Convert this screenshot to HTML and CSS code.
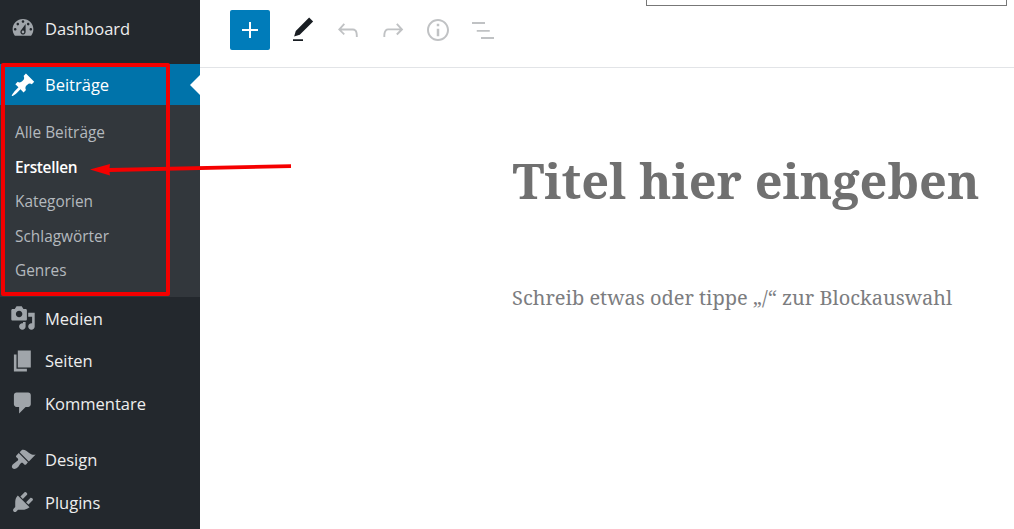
FILE: index.html
```html
<!DOCTYPE html>
<html lang="de">
<head>
<meta charset="utf-8">
<title>Beitrag erstellen</title>
<link rel="stylesheet" href="styles.css">
</head>
<body>
<div class="app">
  <nav class="sidebar">
    <a class="item"><svg class="mi" viewBox="0 0 20 20"><path d="M3.76 16h12.48c1.1-1.37 1.76-3.11 1.76-5 0-4.42-3.58-8-8-8s-8 3.58-8 8c0 1.89.66 3.63 1.76 5zM10 4c.55 0 1 .45 1 1s-.45 1-1 1-1-.45-1-1 .45-1 1-1zM6 6c.55 0 1 .45 1 1s-.45 1-1 1-1-.45-1-1 .45-1 1-1zm8 0c.55 0 1 .45 1 1s-.45 1-1 1-1-.45-1-1 .45-1 1-1zm-5.37 5.55L12 7v6c0 1.1-.9 2-2 2s-2-.9-2-2c0-.57.24-1.08.63-1.45zM4 10c.55 0 1 .45 1 1s-.45 1-1 1-1-.45-1-1 .45-1 1-1zm12 0c.55 0 1 .45 1 1s-.45 1-1 1-1-.45-1-1 .45-1 1-1zm-5 3c0-.55-.45-1-1-1s-1 .45-1 1 .45 1 1 1 1-.45 1-1z"/></svg>Dashboard</a>
    <div class="sep first"></div>
    <a class="item current"><svg class="mi" viewBox="0 0 20 20"><path d="M10.44 3.02l1.82-1.82 6.36 6.35-1.83 1.82c-1.05-.68-2.48-.57-3.41.36l-.75.75c-.92.93-1.04 2.35-.35 3.41l-1.83 1.82-2.41-2.41-2.8 2.79c-.42.42-3.38 2.71-3.8 2.29s1.86-3.39 2.28-3.81l2.79-2.79L4.1 9.36l1.83-1.82c1.05.69 2.48.57 3.4-.36l.75-.75c.93-.92 1.05-2.35.36-3.41z"/></svg>Beiträge</a>
    <div class="submenu">
      <a class="sub">Alle Beiträge</a>
      <a class="sub active">Erstellen</a>
      <a class="sub">Kategorien</a>
      <a class="sub">Schlagwörter</a>
      <a class="sub">Genres</a>
    </div>
    <a class="item"><svg class="mi" viewBox="0 0 20 20"><path d="M13 11V4c0-.55-.45-1-1-1h-1.67L9 1H5L3.67 3H2c-.55 0-1 .45-1 1v7c0 .55.45 1 1 1h10c.55 0 1-.45 1-1zM7 4.5c1.38 0 2.5 1.12 2.5 2.5S8.38 9.5 7 9.5 4.5 8.38 4.5 7 5.62 4.5 7 4.5zM14 6h5v10.5c0 1.38-1.12 2.5-2.5 2.5S14 17.88 14 16.5s1.12-2.5 2.5-2.5c.17 0 .34.02.5.05V9h-3V6zm-4 8.05V13h2v3.5c0 1.38-1.12 2.5-2.5 2.5S7 17.88 7 16.5 8.12 14 9.5 14c.17 0 .34.02.5.05z"/></svg>Medien</a>
    <a class="item"><svg class="mi" viewBox="0 0 20 20"><path d="M6 15V2h10v13H6zm-1 1h8v2H3V5h2v11z"/></svg>Seiten</a>
    <a class="item"><svg class="mi" viewBox="0 0 20 20"><path d="M5 2h9c1.1 0 2 .9 2 2v7c0 1.1-.9 2-2 2h-2l-5 5v-5H5c-1.1 0-2-.9-2-2V4c0-1.1.9-2 2-2z"/></svg>Kommentare</a>
    <div class="sep"></div>
    <a class="item"><svg class="mi" viewBox="0 0 20 20"><path d="M14.48 11.06L7.41 3.99l1.5-1.5c.5-.56 2.3-.47 3.51.32 1.21.8 1.43 1.28 2.91 2.1 1.18.64 2.45 1.26 4.45.85zm-.71.71L6.7 4.7 4.93 6.47c-.39.39-.39 1.02 0 1.41l1.06 1.06c.39.39.39 1.03 0 1.42-.6.6-1.43 1.11-2.21 1.69-.35.26-.7.53-1.01.84C1.43 13.71.96 15.35 1.98 16.37c1.01 1.01 2.65.55 3.99-.77.31-.31.58-.66.84-1.01.58-.78 1.09-1.61 1.69-2.21.39-.39 1.02-.39 1.41 0l1.06 1.06c.39.39 1.02.39 1.41 0z"/></svg>Design</a>
    <a class="item"><svg class="mi" viewBox="0 0 20 20"><path d="M13.11 4.36L9.87 7.6 8 5.73l3.24-3.24c.35-.34 1.05-.2 1.56.32.52.51.66 1.21.31 1.55zm-8 1.77l.91-1.12 9.01 9.01-1.19.84c-.71.71-2.63 1.16-3.82 1.16H6.14L4.9 17.26c-.59.59-1.54.59-2.12 0-.59-.58-.59-1.53 0-2.12l1.24-1.24v-3.88c0-1.13.4-3.19 1.09-3.89zm7.26 3.97l3.24-3.24c.34-.35 1.04-.21 1.55.31.52.51.66 1.21.31 1.55l-3.24 3.25z"/></svg>Plugins</a>
  </nav>
  <main class="main">
    <header class="toolbar">
      <button class="add" type="button"><svg viewBox="0 0 16 16"><path d="M7 0h2v7h7v2H9v7H7V9H0V7h7z"/></svg></button>
      <div class="tools">
        <svg class="tool dark" viewBox="0 0 24 24"><path d="M20.1 5.1L16.9 2 6.2 12.7l-1.3 4.4 4.5-1.3L20.1 5.1zM4 20.8h8v-1.5H4v1.5z"/></svg>
        <svg class="tool" viewBox="0 0 24 24"><path d="M18.3 11.7c-.6-.6-1.4-.9-2.3-.9H6.7l2.9-3.3-1.1-1-4.5 5L8.5 16l1-1-2.7-2.7H16c.5 0 .9.2 1.3.5 1 1 1 3.4 1 4.5v.3h1.5v-.2c0-1.5 0-4.3-1.5-5.7z"/></svg>
        <svg class="tool" viewBox="0 0 24 24"><path d="M15.6 6.5l-1.1 1 2.9 3.3H8c-.9 0-1.7.3-2.3.9-1.4 1.5-1.4 4.2-1.4 5.6v.2h1.5v-.3c0-1.1 0-3.5 1-4.5.3-.3.7-.5 1.3-.5h9.2L14.5 15l1.1 1.1 4.6-4.6-4.6-5z"/></svg>
        <svg class="tool" viewBox="0 0 24 24"><path d="M12 3.2c-4.8 0-8.8 3.9-8.8 8.8 0 4.8 3.9 8.8 8.8 8.8 4.8 0 8.8-3.9 8.8-8.8 0-4.8-4-8.8-8.8-8.8zm0 16c-4 0-7.2-3.3-7.2-7.2C4.8 8 8 4.8 12 4.8s7.2 3.3 7.2 7.2c0 4-3.2 7.2-7.2 7.2zM11 17h2v-6h-2v6zm0-8h2V7h-2v2z"/></svg>
        <svg class="tool" viewBox="0 0 24 24"><path d="M3.200 5.600h10.400v1.500H3.200zM7 11.900h10.400v1.500H7zM10.400 17.600h10.400v1.500H10.400z"/></svg>
      </div>
    </header>
    <div class="editor">
      <h1 class="title">Titel hier eingeben</h1>
      <p class="hint">Schreib etwas oder tippe „/“ zur Blockauswahl</p>
    </div>
    <div class="topbox"></div>
  </main>
</div>
<div class="redbox"></div>
<svg class="arrow" viewBox="0 0 210 20"><path d="M0 11.500 20 6 19.500 10 201 6.200 201 10 19.500 14 20 17.500z"/></svg>
</body>
</html>
```
FILE: styles.css
```css
* { box-sizing: border-box; }
html, body { margin: 0; height: 100%; overflow: hidden; background: #fff; }
body { font-family: "Open Sans", "Noto Sans", sans-serif; position: relative; }
.app { display: flex; height: 529px; }
.sidebar { width: 200px; flex: none; background: #23282d; padding-top: 7px; color: #eee; font-size: 16.5px; }
.item { display: flex; align-items: center; height: 42.5px; padding-left: 9.5px; color: #eee; position: relative; }
.mi { width: 26px; height: 26px; margin-right: 9.5px; fill: #a0a5aa; flex: none; }
.sep { height: 14px; }
.sep.first { height: 14.5px; }
.current { background: #0073aa; color: #fff; height: 41px; }
.current .mi { fill: #fff; }
.current::after { content: ""; position: absolute; right: 0; top: 11px; border: 10px solid transparent; border-left-width: 0; border-right-color: #fff; }
.submenu { background: #32373c; padding: 10.5px 0 9px; height: 192px; }
.sub { display: flex; align-items: center; height: 34.5px; padding-left: 15px; font-size: 15.4px; color: #b4b9be; }
.sub.active { color: #fff; font-weight: 600; letter-spacing: -0.3px; }
.main { flex: 1; position: relative; min-width: 0; }
.toolbar { display: flex; align-items: flex-start; height: 68px; padding: 10px 0 0 30px; border-bottom: 1px solid #e2e4e7; }
.add { width: 40px; height: 40px; padding: 0; border: 0; border-radius: 2px; background: #007cba; display: flex; align-items: center; justify-content: center; }
.add svg { width: 16px; height: 16px; fill: #fff; }
.tools { display: flex; gap: 15px; margin-left: 18px; padding-top: 5px; }
.tool { width: 30px; height: 30px; fill: #c0c2c4; }
.tool.dark { fill: #191e23; }
.editor { padding: 81px 0 0 312.5px; font-family: "Noto Serif", "DejaVu Serif", serif; }
.title { margin: 0; font-size: 48.75px; line-height: 62px; font-weight: 700; color: #707070; white-space: nowrap; }
.hint { margin: 72px 0 0 -0.5px; font-size: 20px; line-height: 30px; color: #7c7d7f; white-space: nowrap; }
.topbox { position: absolute; left: 446px; top: -4px; width: 361px; height: 10px; border: 1px solid #777; background: #fff; }
.redbox { position: absolute; left: 1px; top: 63px; width: 169px; height: 233px; border: 4px solid #f30000; border-radius: 2px; }
.arrow { position: absolute; left: 90px; top: 158px; width: 210px; height: 20px; fill: #f50000; }
```
